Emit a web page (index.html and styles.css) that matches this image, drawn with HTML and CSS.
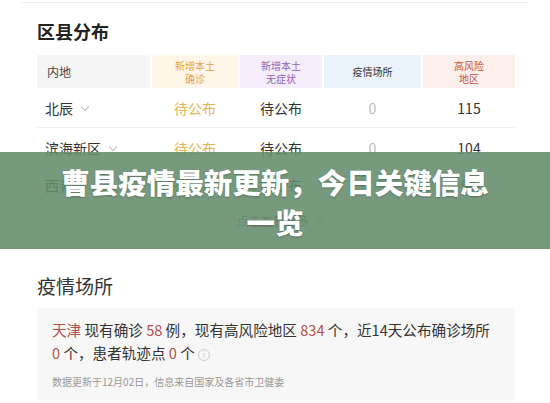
FILE: index.html
```html
<!DOCTYPE html>
<html lang="zh-CN">
<head>
  <meta charset="UTF-8">
  <title>曹县疫情最新更新，今日关键信息一览</title>
  <link rel="stylesheet" href="styles.css">
</head>
<body>
  <div class="prev-card"></div>

  <div class="page">
    <h2 class="section-title">区县分布</h2>

    <div class="table">
      <div class="row head">
        <div class="cell c-area">内地</div>
        <div class="cell c-confirm">新增本土<br>确诊</div>
        <div class="cell c-asym">新增本土<br>无症状</div>
        <div class="cell c-place">疫情场所</div>
        <div class="cell c-risk">高风险<br>地区</div>
      </div>
      <div class="row">
        <div class="cell area">北辰 <span class="chev"></span></div>
        <div class="cell orange">待公布</div>
        <div class="cell">待公布</div>
        <div class="cell gray">0</div>
        <div class="cell">115</div>
      </div>
      <div class="row">
        <div class="cell area">滨海新区 <span class="chev"></span></div>
        <div class="cell orange">待公布</div>
        <div class="cell">待公布</div>
        <div class="cell gray">0</div>
        <div class="cell">104</div>
      </div>
      <div class="row last">
        <div class="cell area">西青 <span class="chev"></span></div>
        <div class="cell orange">待公布</div>
        <div class="cell">待公布</div>
        <div class="cell gray">0</div>
        <div class="cell">96</div>
      </div>
      <div class="more">点击查看更多 <span class="chev"></span></div>
    </div>

    <h2 class="section-title light">疫情场所</h2>
    <div class="place-box">
      <p class="summary"><span class="red">天津</span> 现有确诊 <span class="red">58</span> 例，现有高风险地区 <span class="red">834</span> 个，近14天公布确诊场所 <span class="red">0</span> 个，患者轨迹点 <span class="red">0</span> 个 <span class="info">i</span></p>
      <p class="note">数据更新于12月02日，信息来自国家及各省市卫健委</p>
    </div>
  </div>

  <div class="banner">
    <h1>曹县疫情最新更新，今日关键信息一览</h1>
  </div>
</body>
</html>
```

FILE: styles.css
```css
body {
  font-family: "Noto Sans CJK SC", "Noto Sans", sans-serif;
  background: #fff;
  margin: 0;
  padding: 0;
  color: #333;
  width: 550px;
  height: 403px;
  overflow: hidden;
  position: relative;
}
.prev-card {
  margin: 0 22px;
  height: 2px;
  border-bottom: 1px solid #efefef;
}
.page {
  padding: 0 35px 0 37px;
}
.section-title {
  margin: 0;
  font-size: 18px;
  line-height: 24px;
  font-weight: bold;
  color: #222;
  padding-top: 16px;
}
.section-title.light {
  font-weight: normal;
  font-size: 19px;
  color: #333;
  padding-top: 45px;
}
.table {
  margin-top: 12px;
}
.row {
  display: grid;
  grid-template-columns: 113px 86px 82px 97px 1fr;
  column-gap: 2px;
  height: 39px;
  border-bottom: 1px solid #eeeeee;
  align-items: center;
  font-size: 14px;
  color: #333;
}
.row.last {
  border-bottom: none;
  height: 34px;
}
.row.head {
  height: 33px;
  border-bottom: none;
  font-size: 10px;
  line-height: 13px;
  align-items: stretch;
}
.cell {
  text-align: center;
}
.head .cell {
  display: flex;
  align-items: center;
  justify-content: center;
}
.head .c-area {
  background: #f5f5f5;
  justify-content: flex-start;
  padding-left: 10px;
  font-size: 12px;
  color: #444;
}
.c-confirm {
  background: #fff6ea;
  color: #e4a344;
}
.c-asym {
  background: #f5edfb;
  color: #8e64b4;
}
.c-place {
  background: #eaf2fb;
  color: #333;
}
.c-risk {
  background: #fdf0ec;
  color: #c5553b;
}
.area {
  text-align: left;
  padding-left: 8px;
  font-size: 14px;
}
.orange {
  color: #e5b453;
}
.gray {
  color: #bbb;
}
.chev {
  display: inline-block;
  width: 5px;
  height: 5px;
  border-right: 1px solid #bbb;
  border-bottom: 1px solid #bbb;
  transform: rotate(45deg);
  margin: 0 0 4px 6px;
}
.more {
  text-align: center;
  font-size: 12px;
  color: #666;
  padding-top: 10px;
  padding-left: 8px;
}
.place-box {
  margin-top: 10px;
  background: #f7f7f7;
  padding: 10px 24px 12px 15px;
}
.summary {
  margin: 0;
  font-size: 14.6px;
  line-height: 23px;
  color: #333;
}
.red {
  color: #b3514d;
}
.info {
  display: inline-block;
  width: 10px;
  height: 10px;
  border: 1px solid #ccc;
  border-radius: 50%;
  font-size: 8px;
  line-height: 10px;
  text-align: center;
  color: #ccc;
  vertical-align: 1px;
}
.note {
  margin: 11px 0 0;
  font-size: 10px;
  color: #999;
  line-height: 14px;
}
.banner {
  position: absolute;
  left: 0;
  top: 152px;
  width: 550px;
  height: 97px;
  background: rgba(100, 140, 108, 0.88);
  display: flex;
  align-items: center;
  justify-content: center;
}
.banner h1 {
  margin: 3px 0 0;
  width: 440px;
  text-align: center;
  color: #fff;
  font-size: 28.5px;
  line-height: 40px;
  font-weight: 900;
  text-shadow: 0 1px 2px rgba(0, 0, 0, 0.25);
}
```
